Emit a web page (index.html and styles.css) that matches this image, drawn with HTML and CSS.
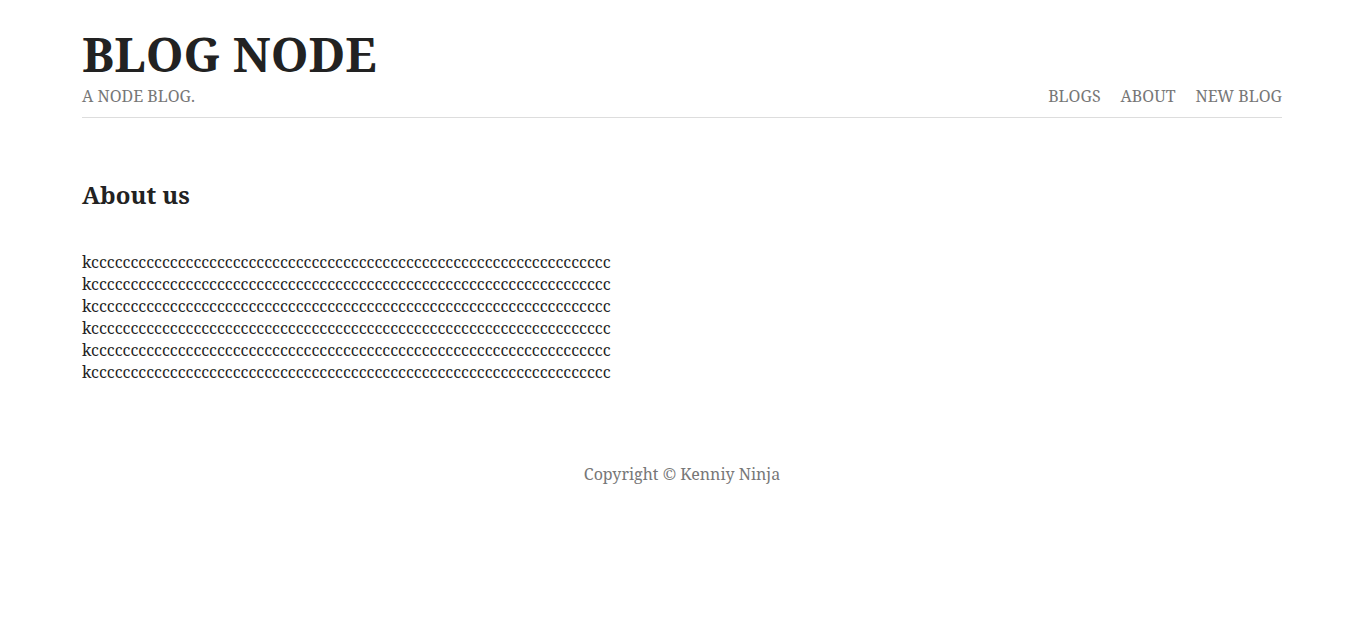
FILE: index.html
```html
<!DOCTYPE html>
<html>
<head>
<meta charset="utf-8">
<title>Blog Node</title>
<link rel="stylesheet" href="styles.css">
</head>
<body>
<div class="wrap">
  <header class="site-header">
    <h1 class="site-title">BLOG NODE</h1>
    <div class="header-row">
      <p class="tagline">A NODE BLOG.</p>
      <nav class="nav">
        <a href="#">BLOGS</a>
        <a href="#">ABOUT</a>
        <a href="#">NEW BLOG</a>
      </nav>
    </div>
  </header>
  <main class="content">
    <h2 class="page-title">About us</h2>
    <div class="about-text">
      <p>kcccccccccccccccccccccccccccccccccccccccccccccccccccccccccccccccccc</p>
      <p>kcccccccccccccccccccccccccccccccccccccccccccccccccccccccccccccccccc</p>
      <p>kcccccccccccccccccccccccccccccccccccccccccccccccccccccccccccccccccc</p>
      <p>kcccccccccccccccccccccccccccccccccccccccccccccccccccccccccccccccccc</p>
      <p>kcccccccccccccccccccccccccccccccccccccccccccccccccccccccccccccccccc</p>
      <p>kcccccccccccccccccccccccccccccccccccccccccccccccccccccccccccccccccc</p>
    </div>
  </main>
  <footer class="site-footer">Copyright © Kenniy Ninja</footer>
</div>
</body>
</html>
```
FILE: styles.css
```css
html, body {
  margin: 0;
  padding: 0;
  background: #fff;
}
body {
  font-family: "Noto Serif", "DejaVu Serif", "Liberation Serif", serif;
  font-size: 16px;
  color: #222;
}
.wrap {
  width: 1200px;
  margin: 0 auto;
}
.site-header {
  padding-top: 26px;
  border-bottom: 1px solid #ddd;
}
.site-title {
  margin: 0;
  font-size: 48px;
  line-height: 56px;
  font-weight: 700;
  color: #222;
}
.header-row {
  display: flex;
  justify-content: space-between;
  align-items: baseline;
  padding-bottom: 7px;
}
.tagline {
  margin: 0;
  color: #777;
  line-height: 28px;
}
.nav {
  display: flex;
  gap: 20px;
}
.nav a {
  color: #777;
  text-decoration: none;
  line-height: 28px;
}
.content {
  padding-top: 61px;
}
.page-title {
  margin: 0;
  font-size: 24px;
  line-height: 32px;
  font-weight: 700;
}
.about-text {
  margin-top: 40px;
}
.about-text p {
  margin: 0;
  line-height: 22px;
}
.site-footer {
  text-align: center;
  color: #777;
  padding-top: 79px;
  line-height: 24px;
}
```
